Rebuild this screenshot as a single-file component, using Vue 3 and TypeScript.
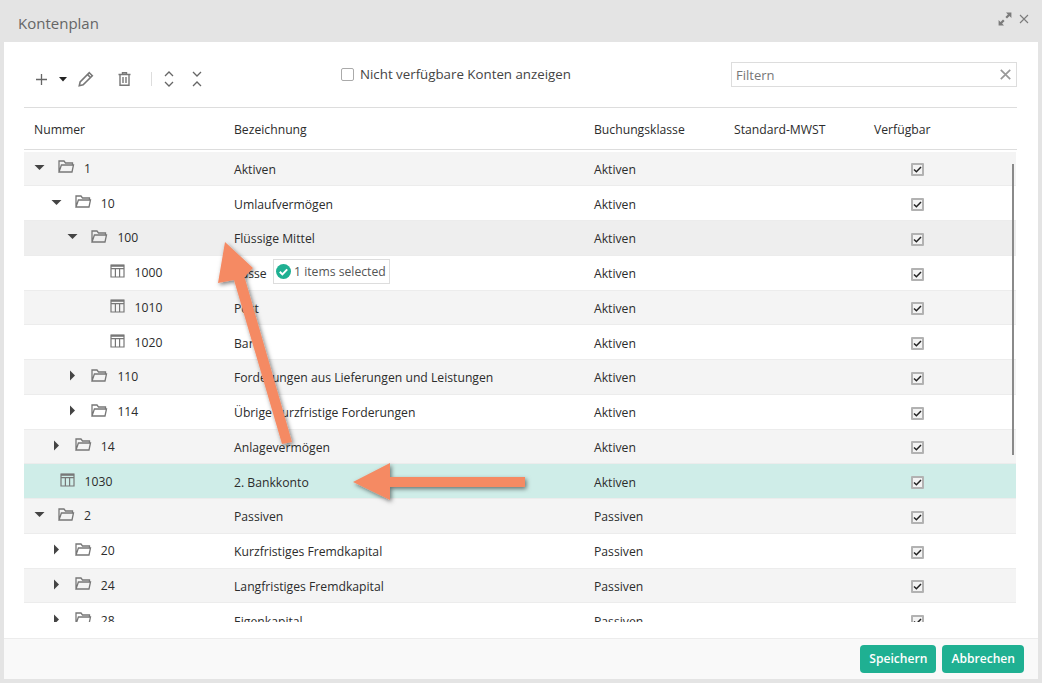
<script setup lang="ts">
interface Row {
  num: string
  name: string
  klasse: string
  level: number
  kind: 'open' | 'closed' | 'leaf'
  state?: 'hover' | 'new'
  badge?: boolean
}

const rows: Row[] = [
  { num: '1', name: 'Aktiven', klasse: 'Aktiven', level: 0, kind: 'open' },
  { num: '10', name: 'Umlaufvermögen', klasse: 'Aktiven', level: 1, kind: 'open' },
  { num: '100', name: 'Flüssige Mittel', klasse: 'Aktiven', level: 2, kind: 'open', state: 'hover' },
  { num: '1000', name: 'Kasse', klasse: 'Aktiven', level: 3, kind: 'leaf', badge: true },
  { num: '1010', name: 'Post', klasse: 'Aktiven', level: 3, kind: 'leaf' },
  { num: '1020', name: 'Bank', klasse: 'Aktiven', level: 3, kind: 'leaf' },
  { num: '110', name: 'Forderungen aus Lieferungen und Leistungen', klasse: 'Aktiven', level: 2, kind: 'closed' },
  { num: '114', name: 'Übrige kurzfristige Forderungen', klasse: 'Aktiven', level: 2, kind: 'closed' },
  { num: '14', name: 'Anlagevermögen', klasse: 'Aktiven', level: 1, kind: 'closed' },
  { num: '1030', name: '2. Bankkonto', klasse: 'Aktiven', level: 0, kind: 'leaf', state: 'new' },
  { num: '2', name: 'Passiven', klasse: 'Passiven', level: 0, kind: 'open' },
  { num: '20', name: 'Kurzfristiges Fremdkapital', klasse: 'Passiven', level: 1, kind: 'closed' },
  { num: '24', name: 'Langfristiges Fremdkapital', klasse: 'Passiven', level: 1, kind: 'closed' },
  { num: '28', name: 'Eigenkapital', klasse: 'Passiven', level: 1, kind: 'closed' },
]

const treeIndent = (row: Row) => `${row.level * 16.7 + (row.kind === 'leaf' ? 36 : 10)}px`
</script>

<template>
  <div class="dialog">
    <header class="dialog__head">
      <span class="dialog__title">Kontenplan</span>
      <svg class="head-icon" width="14" height="14" viewBox="0 0 14 14">
        <path d="M8 .6h5.400V6l-1.900-1.900L9 6.600 7.400 5l2.500-2.500zM6 13.400H.6V8l1.900 1.900L5 7.400 6.600 9l-2.500 2.500z" fill="#7b7b7b" />
      </svg>
      <svg class="head-icon head-icon--close" width="10" height="10" viewBox="0 0 10 10">
        <path d="M1 1l8 8M9 1l-8 8" stroke="#7b7b7b" stroke-width="1.100" fill="none" />
      </svg>
    </header>

    <main class="dialog__body">
      <div class="toolbar">
        <div class="tools">
          <svg class="tool tool--plus" width="13" height="13" viewBox="0 0 13 13">
            <path d="M6.500 1v11M1 6.500h11" stroke="#666" stroke-width="1.300" fill="none" />
          </svg>
          <svg class="tool tool--caret" width="8" height="5" viewBox="0 0 8 5">
            <path d="M0 0h8L4 4.600z" fill="#222" />
          </svg>
          <svg class="tool tool--pencil" width="16" height="16" viewBox="0 0 15 15">
            <path d="M10.600 1.600l2.800 2.800-8.600 8.600-3.600.8.8-3.600zM9 3.400l2.700 2.700" stroke="#777" stroke-width="1.500" fill="none" />
          </svg>
          <svg class="tool tool--trash" width="13" height="14" viewBox="0 0 13 14">
            <path d="M0.500 2.500h12M4.500 2.300V.8h4v1.500M2 2.500v10.700h9V2.500M5 5v6M8 5v6" stroke="#777" stroke-width="1.400" fill="none" />
          </svg>
          <span class="tools__sep"></span>
          <svg class="tool tool--expand" width="10" height="16" viewBox="0 0 10 16">
            <path d="M1 5l4-4 4 4M1 11l4 4 4-4" stroke="#666" stroke-width="1.300" fill="none" />
          </svg>
          <svg class="tool tool--collapse" width="10" height="16" viewBox="0 0 10 16">
            <path d="M1 1l4 4 4-4M1 15l4-4 4 4" stroke="#666" stroke-width="1.300" fill="none" />
          </svg>
        </div>
        <label class="avail">
          <span class="avail__box"></span>
          Nicht verfügbare Konten anzeigen
        </label>
        <div class="filter">
          <span>Filtern</span>
          <svg width="11" height="11" viewBox="0 0 11 11">
            <path d="M.8.8l9.400 9.400M10.200.8L.8 10.200" stroke="#999" stroke-width="1.700" fill="none" />
          </svg>
        </div>
      </div>

      <div class="grid-row grid-row--head">
        <div class="cell">Nummer</div>
        <div class="cell">Bezeichnung</div>
        <div class="cell">Buchungsklasse</div>
        <div class="cell">Standard-MWST</div>
        <div class="cell">Verfügbar</div>
      </div>

      <div class="rows">
        <div
          v-for="row in rows"
          :key="row.num"
          class="grid-row grid-row--data"
          :class="row.state ? `is-${row.state}` : ''"
        >
          <div class="cell tree" :style="{ paddingLeft: treeIndent(row) }">
            <svg v-if="row.kind === 'open'" class="caret" width="11" height="11" viewBox="0 0 11 11">
              <path d="M.5 3h10L5.500 8z" fill="#444" />
            </svg>
            <svg v-else-if="row.kind === 'closed'" class="caret" width="11" height="11" viewBox="0 0 11 11">
              <path d="M3 .5v10L8 5.500z" fill="#444" />
            </svg>
            <svg v-if="row.kind === 'leaf'" class="node-icon" width="15" height="14" viewBox="0 0 15 14">
              <path d="M1 1h13v12H1zM1 4.600h13M5.400 4.600V13M9.600 4.600V13" stroke="#777" stroke-width="1.200" fill="none" />
              <path d="M1 1.800h13" stroke="#777" stroke-width="2" fill="none" />
            </svg>
            <svg v-else class="node-icon node-icon--folder" width="17" height="13" viewBox="0 0 17 13">
              <path d="M1 12V1h5l1.500 2h7v2M1 12h13l1.500-7H3.400L1 12z" stroke="#777" stroke-width="1.300" fill="none" />
            </svg>
            <span>{{ row.num }}</span>
          </div>
          <div class="cell name">
            {{ row.name }}
            <span v-if="row.badge" class="selected-badge">
              <svg width="15" height="15" viewBox="0 0 15 15">
                <circle cx="7.500" cy="7.500" r="7.500" fill="#1fb092" />
                <path d="M3.800 7.800l2.600 2.600 4.800-5" stroke="#fff" stroke-width="2" fill="none" />
              </svg>
              1 items selected
            </span>
          </div>
          <div class="cell">{{ row.klasse }}</div>
          <div class="cell"></div>
          <div class="cell check-cell">
            <span class="check">
              <svg width="9" height="7" viewBox="0 0 9 7">
                <path d="M1 3.500l2.400 2.300L8 1" stroke="#222" stroke-width="1.500" fill="none" />
              </svg>
            </span>
          </div>
        </div>
        <span class="scrollbar"></span>
      </div>
    </main>

    <footer class="dialog__foot">
      <button class="btn" type="button">Speichern</button>
      <button class="btn" type="button">Abbrechen</button>
    </footer>

    <!-- Anmerkungspfeile aus dem Screenshot -->
    <svg class="arrows" width="1042" height="683" viewBox="0 0 1042 683">
      <defs>
        <filter id="arrow-shadow" x="-20%" y="-20%" width="140%" height="140%">
          <feDropShadow dx="1.500" dy="2" stdDeviation="2" flood-color="#000" flood-opacity="0.5" />
        </filter>
      </defs>
      <g fill="#f58a64" filter="url(#arrow-shadow)">
        <path d="M225 242L253 268 244.500 277 292 442 282 444 234 280 218 283z" />
        <path d="M353 482L390 463V477H525V487H390V500z" />
      </g>
    </svg>
  </div>
</template>

<style scoped>
.dialog {
  position: relative;
  width: 1042px;
  height: 683px;
  display: flex;
  flex-direction: column;
  padding: 0 4px 4px;
  box-sizing: border-box;
  background: #e4e4e4;
  font-family: "Open Sans", "Noto Sans", sans-serif;
  font-size: 12.2px;
  color: #2c2c2c;
  overflow: hidden;
}

.dialog__head {
  height: 42px;
  flex: none;
  display: flex;
  align-items: center;
  padding: 0 9px 0 14px;
}

.dialog__title {
  flex: 1;
  font-size: 15px;
  color: #666;
  margin-top: 3px;
}

.head-icon {
  margin-top: -5px;
}

.head-icon--close {
  margin-left: 7px;
}

.dialog__body {
  flex: 1;
  min-height: 0;
  background: #fff;
  padding: 0 21px 0 20px;
  display: flex;
  flex-direction: column;
}

.toolbar {
  height: 66px;
  flex: none;
  box-sizing: border-box;
  border-bottom: 1px solid #ddd;
  display: flex;
  align-items: center;
  position: relative;
}

.tools {
  width: 317px;
  flex: none;
  display: flex;
  align-items: center;
  padding-left: 11px;
  box-sizing: border-box;
  margin-top: 9px;
}

.tool--caret {
  margin-left: 11px;
}

.tool--pencil {
  margin-left: 11px;
}

.tool--trash {
  margin-left: 24px;
}

.tools__sep {
  width: 1px;
  height: 14px;
  margin-left: 20px;
  background: #ddd;
}

.tool--expand {
  margin-left: 12px;
}

.tool--collapse {
  margin-left: 18px;
}

.avail {
  flex: 1;
  display: flex;
  align-items: center;
  gap: 6px;
  font-size: 13.3px;
  color: #444;
  margin-top: -1px;
}

.avail__box {
  width: 13px;
  height: 13px;
  box-sizing: border-box;
  border: 1.500px solid #aaa;
  border-radius: 2px;
}

.filter {
  width: 286px;
  height: 25px;
  flex: none;
  box-sizing: border-box;
  border: 1px solid #ddd;
  display: flex;
  align-items: center;
  justify-content: space-between;
  padding: 0 5px 0 4px;
  font-size: 13px;
  color: #777;
}

.grid-row {
  display: grid;
  grid-template-columns: 200px 360px 140px 140px 1fr;
  align-items: center;
}

.grid-row--head {
  height: 42px;
  flex: none;
  box-sizing: border-box;
  border-bottom: 1px solid #ddd;
  padding-top: 2px;
}

.rows {
  position: relative;
  height: 470px;
  flex: none;
  margin-top: 1.500px;
  margin-right: 1px;
  overflow: hidden;
}

.grid-row--data {
  height: 34.750px;
  box-sizing: border-box;
  border-bottom: 1px solid #ececec;
  padding-top: 2px;
}

.grid-row--data:nth-child(odd) {
  background: #f4f4f4;
}

.grid-row--data.is-hover {
  background: #eee;
}

.grid-row--data.is-new {
  background: #cfede8;
}

.cell {
  padding-left: 10px;
  white-space: nowrap;
}

.tree {
  display: flex;
  align-items: center;
  margin-top: -2px;
}

.caret {
  flex: none;
  margin-right: 13px;
  margin-top: -2px;
}

.node-icon {
  flex: none;
  margin-right: 9.500px;
  margin-top: -3px;
}

.node-icon--folder {
  margin-right: 9px;
}

.name {
  position: relative;
}

.selected-badge {
  position: absolute;
  left: 49px;
  top: -6px;
  height: 25px;
  width: 117px;
  box-sizing: border-box;
  display: flex;
  align-items: center;
  gap: 3px;
  padding-left: 2px;
  background: #fff;
  border: 1px solid #ddd;
  color: #555;
}

.check-cell {
  padding-left: 47px;
  display: flex;
  margin-top: 1px;
}

.check {
  width: 13px;
  height: 13px;
  box-sizing: border-box;
  border: 2px solid #b2b2b2;
  border-radius: 1px;
  background: #f3f3f3;
  display: flex;
  align-items: center;
  justify-content: center;
}

.check svg {
  flex: none;
}

.scrollbar {
  position: absolute;
  right: 2px;
  top: 12px;
  width: 2px;
  height: 291px;
  background: #8a8a8a;
}

.dialog__foot {
  height: 41px;
  flex: none;
  box-sizing: border-box;
  border-top: 1px solid #ececec;
  background: #f9f9f9;
  display: flex;
  justify-content: flex-end;
  align-items: center;
  gap: 6px;
  padding: 0 14px 1px 0;
}

.btn {
  height: 28px;
  padding: 0 9px;
  border: 0;
  border-radius: 4px;
  background: #1fb092;
  color: #fff;
  font-family: inherit;
  font-size: 12.1px;
  font-weight: 600;
}

.arrows {
  position: absolute;
  left: 0;
  top: 0;
  pointer-events: none;
}
</style>
